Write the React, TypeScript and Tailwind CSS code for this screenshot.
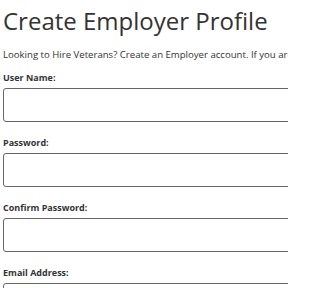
import React from "react";

const fields = ["User Name:", "Password:", "Confirm Password:", "Email Address:"];

export default function App() {
  return (
    <div className="w-[288px] h-[288px] overflow-hidden bg-white text-[#333] font-['Open_Sans',sans-serif]">
      <div className="pl-[3px] w-[420px]">
        <h1 className="text-[24px] leading-[30px] pt-[6px] m-0 font-medium whitespace-nowrap">Create Employer Profile</h1>
        <p className="text-[9.6px] leading-[14px] mt-[12px] whitespace-nowrap">
          Looking to Hire Veterans? Create an Employer account. If you are an employer
        </p>
        <div className="mt-[10px] flex flex-col gap-[15px]">
          {fields.map((f) => (
            <div key={f} className="flex flex-col">
              <label className="text-[9px] leading-[12px] font-bold">{f}</label>
              <div className="mt-[4px] h-[34px] w-[400px] border border-[#666] rounded-[3px] bg-white" />
            </div>
          ))}
        </div>
      </div>
    </div>
  );
}
